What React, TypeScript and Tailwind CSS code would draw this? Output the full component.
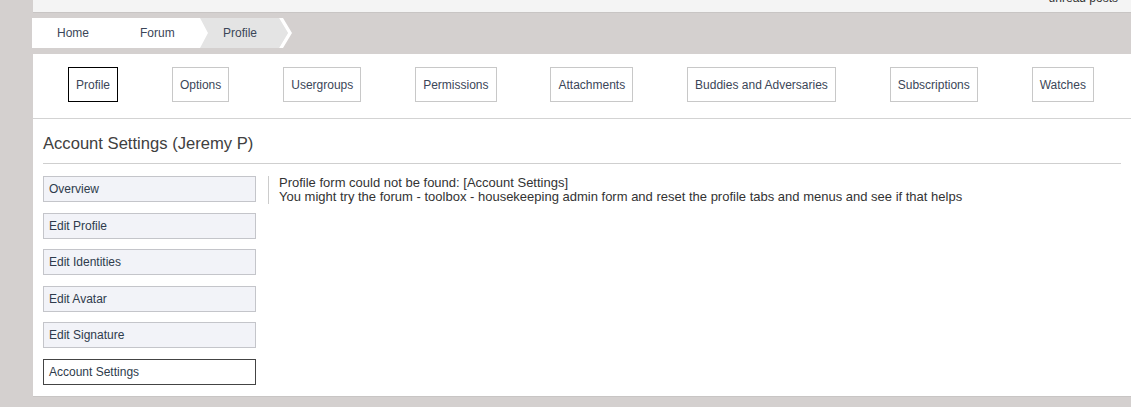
import React from "react";

const tabs = [
  "Profile",
  "Options",
  "Usergroups",
  "Permissions",
  "Attachments",
  "Buddies and Adversaries",
  "Subscriptions",
  "Watches",
];

const navItems = [
  "Overview",
  "Edit Profile",
  "Edit Identities",
  "Edit Avatar",
  "Edit Signature",
  "Account Settings",
];

const App = () => {
  return (
    <div
      className="min-h-screen w-[1131px] h-[407px] overflow-hidden bg-[#d4d0cf] pl-[32px] text-[12px] text-[#333]"
      style={{ fontFamily: '"Liberation Sans", Arial, sans-serif' }}
    >
      {/* top bar */}
      <div className="h-[13px] ml-[1px] bg-[#f4f4f4] border-b border-[#c8c5c4] overflow-hidden flex justify-end pr-[13px]">
        <span className="-mt-[9px] leading-[14px] text-[#333]">unread posts</span>
      </div>

      {/* breadcrumb */}
      <div className="flex h-[30px] mt-[5px] text-[#3b4658]">
        <div className="w-[168px] bg-white flex items-center">
          <span className="pl-[25px]">Home</span>
          <span className="ml-[51px]">Forum</span>
        </div>
        <svg width="10" height="30" viewBox="0 0 10 30" className="block">
          <rect x="0" y="0" width="10" height="30" fill="#e4e4e4" />
          <polygon points="0,0 8,15 0,30" fill="#ffffff" />
        </svg>
        <div className="bg-[#e4e4e4] flex items-center pl-[13px] pr-[22px]">
          Profile
        </div>
        <svg width="14" height="30" viewBox="0 0 14 30" className="block">
          <polygon points="0,0 9,15 0,30" fill="#e4e4e4" />
          <polygon points="0,0 4,0 13,15 4,30 0,30 9,15" fill="#ffffff" />
        </svg>
      </div>

      {/* main panel */}
      <div className="mt-[6px] ml-[1px] bg-white border-b border-[#c8c5c4]">
        <div className="flex justify-between pl-[35px] pr-[37px] pt-[13px] pb-[16px] border-b border-[#d3d3d3]">
          {tabs.map((t, i) => (
            <div
              key={t}
              className={`h-[35px] px-[7px] flex items-center border text-[#3b4658] ${
                i === 0 ? "border-black" : "border-[#c8c8c8]"
              }`}
            >
              {t}
            </div>
          ))}
        </div>

        <div className="px-[10px]">
          <div className="pt-[15px] pb-[9px] border-b border-[#cfcfcf] text-[16.6px] leading-[20px] text-[#404040]">
            Account Settings (Jeremy P)
          </div>

          <div className="flex pt-[12px] pb-[11px]">
            <div className="w-[213px] flex flex-col gap-[10.6px]">
              {navItems.map((n, i) => (
                <div
                  key={n}
                  className={`h-[26px] flex items-center pl-[5px] border text-[#2e3b4c] ${
                    i === navItems.length - 1
                      ? "bg-white border-[#444]"
                      : "bg-[#f2f3f8] border-[#c4c5ca]"
                  }`}
                >
                  {n}
                </div>
              ))}
            </div>
            <div className="ml-[12px] self-start border-l border-[#cccccc] pl-[10px] text-[13px] leading-[14px] text-[#333]">
              <div>Profile form could not be found: [Account Settings]</div>
              <div>
                You might try the forum - toolbox - housekeeping admin form and
                reset the profile tabs and menus and see if that helps
              </div>
            </div>
          </div>
        </div>
      </div>
    </div>
  );
};

export default App;
